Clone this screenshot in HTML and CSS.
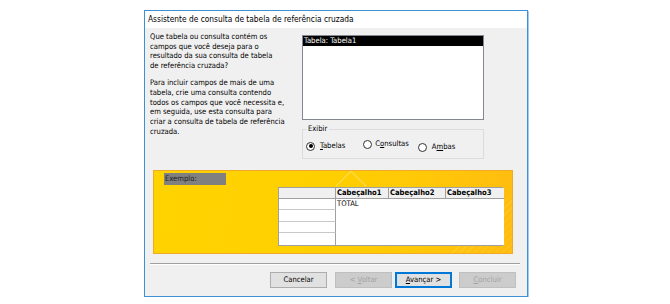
FILE: index.html
```html
<!DOCTYPE html>
<html lang="pt">
<head>
<meta charset="utf-8">
<link rel="stylesheet" href="styles.css">
</head>
<body>
<div class="window">
  <div class="titlebar">Assistente de consulta de tabela de referência cruzada</div>
  <div class="content">
    <div class="top">
      <div class="intro">
        <p>Que tabela ou consulta contém os<br>campos que você deseja para o<br>resultado da sua consulta de tabela<br>de referência cruzada?</p>
        <p>Para incluir campos de mais de uma<br>tabela, crie uma consulta contendo<br>todos os campos que você necessita e,<br>em seguida, use esta consulta para<br>criar a consulta de tabela de referência<br>cruzada.</p>
      </div>
      <div class="side">
        <div class="listbox"><div class="item selected">Tabela: Tabela1</div></div>
        <div class="group">
          <div class="legend">Exibir</div>
          <div class="radios">
            <div class="radio r1"><span class="dot checked"></span><span><u>T</u>abelas</span></div>
            <div class="radio r2"><span class="dot"></span><span>C<u>o</u>nsultas</span></div>
            <div class="radio r3"><span class="dot"></span><span>A<u>m</u>bas</span></div>
          </div>
        </div>
      </div>
    </div>
    <div class="example">
      <div class="deco deco1"></div>
      <div class="deco deco2"></div>
      <div class="example-label">Exemplo:</div>
      <div class="xtab">
        <div class="corner"></div>
        <div class="hcell">Cabeçalho1</div>
        <div class="hcell">Cabeçalho2</div>
        <div class="hcell last">Cabeçalho3</div>
        <div class="rcell"></div>
        <div class="data">TOTAL</div>
        <div class="rcell"></div>
        <div class="rcell"></div>
        <div class="rcell lastrow"></div>
      </div>
    </div>
    <div class="sep"></div>
    <div class="buttons">
      <div class="btn">Cancelar</div>
      <div class="btn disabled back">&lt; <u>V</u>oltar</div>
      <div class="btn default"><u>A</u>vançar &gt;</div>
      <div class="btn disabled finish"><u>C</u>oncluir</div>
    </div>
  </div>
</div>
</body>
</html>
```

FILE: styles.css
```css
* { box-sizing: border-box; }
html, body { margin: 0; padding: 0; background: #ffffff; }
body {
  font-family: "DejaVu Sans Condensed", "DejaVu Sans", sans-serif;
  font-stretch: condensed;
  font-size: 7.6px;
  color: #000;
}
.window {
  margin: 10px 0 0 144px;
  width: 384px;
  height: 287px;
  border: 1px solid #3d8fd6;
  box-shadow: 1px 1px 0 #9fcdf0;
  background: #f0f0f0;
  display: flex;
  flex-direction: column;
}
.titlebar {
  height: 17px;
  background: #ffffff;
  padding-left: 3px;
  font-size: 8.3px;
  line-height: 16px;
  color: #000;
}
.content {
  flex: 1;
  display: flex;
  flex-direction: column;
}
.top {
  display: flex;
  height: 131px;
}
.intro {
  width: 157px;
  padding: 4px 0 0 5px;
  line-height: 9.7px;
}
.intro p { margin: 0 0 7.3px 0; white-space: nowrap; }
.side {
  width: 182px;
  padding-top: 7px;
  display: flex;
  flex-direction: column;
}
.listbox {
  height: 85px;
  background: #fff;
  border: 1px solid #828790;
}
.item {
  height: 10px;
  line-height: 10px;
  padding-left: 1px;
}
.item.selected {
  background: #000;
  color: #fff;
}
.group {
  margin-top: 9px;
  height: 30px;
  border: 1px solid #dcdcdc;
  position: relative;
}
.legend {
  position: absolute;
  top: -6px;
  left: 3px;
  padding: 0 2px;
  background: #f0f0f0;
  line-height: 10px;
}
.radios {
  display: flex;
  padding: 10px 0 0 3px;
}
.radio {
  display: flex;
  align-items: center;
  gap: 5px;
  line-height: 10px;
}
.r2 { margin-left: 18px; gap: 3px; margin-top: -4px; }
.r3 { margin-left: 9px; gap: 5px; margin-top: 2px; }
.dot {
  width: 9px;
  height: 9px;
  border-radius: 50%;
  border: 1px solid #333;
  background: #fff;
  position: relative;
  flex: none;
}
.dot.checked::after {
  content: "";
  position: absolute;
  left: 1.5px;
  top: 1.5px;
  width: 4px;
  height: 4px;
  border-radius: 50%;
  background: #000;
}
.example {
  margin: 11px 0 0 8px;
  width: 360px;
  height: 84px;
  border: 1px solid #f0aa2a;
  background: linear-gradient(95deg, #ffd300 0%, #ffd000 45%, #ffc808 75%, #ffbc10 100%);
  position: relative;
  overflow: hidden;
  display: flex;
  flex-direction: column;
  padding: 2px 0 0 10px;
}
.deco {
  position: absolute;
  pointer-events: none;
}
.deco1 {
  left: 186px;
  top: 4px;
  width: 22px;
  height: 22px;
  border-left: 1px solid rgba(255,255,255,0.35);
  border-top: 1px solid rgba(255,255,255,0.35);
  transform: rotate(45deg);
}
.deco2 {
  right: 0;
  bottom: 0;
  width: 160px;
  height: 84px;
  background:
    repeating-linear-gradient(135deg, rgba(255,255,255,0.12) 0 1px, transparent 1px 5px);
  clip-path: polygon(60% 100%, 100% 30%, 100% 100%);
}
.example-label {
  width: 62px;
  height: 12px;
  background: #808080;
  color: #202020;
  line-height: 12px;
  padding-left: 1px;
  position: relative;
}
.xtab {
  position: relative;
  margin: 2px 0 0 114px;
  width: 225px;
  display: grid;
  grid-template-columns: 57px 53px 57px 58px;
  grid-template-rows: 11px 11px 12px 11px 12px;
  border: 1px solid #a0a0a0;
  background: #fff;
}
.corner {
  background: #f0f0f0;
  border-right: 1px solid #a0a0a0;
  border-bottom: 1px solid #a0a0a0;
}
.hcell {
  background: #f0f0f0;
  font-weight: bold;
  line-height: 10px;
  padding-left: 1px;
  border-right: 1px solid #a0a0a0;
  border-bottom: 1px solid #a0a0a0;
  white-space: nowrap;
}
.hcell.last { border-right: none; }
.rcell {
  grid-column: 1;
  background: #fff;
  border-right: 1px solid #a0a0a0;
  border-bottom: 1px solid #c8c8c8;
}
.rcell.lastrow { border-bottom: none; }
.data {
  grid-column: 2 / 5;
  grid-row: 2 / 6;
  background: #fff;
  line-height: 10px;
  padding-left: 1px;
}
.sep {
  margin: 9px 0 0 5px;
  width: 370px;
  height: 2px;
  border-top: 1px solid #a0a0a0;
  border-bottom: 1px solid #ffffff;
}
.buttons {
  display: flex;
  justify-content: flex-end;
  padding-right: 11px;
  margin-top: 7px;
}
.btn {
  width: 57px;
  height: 16px;
  border: 1px solid #adadad;
  background: #e1e1e1;
  text-align: center;
  line-height: 14px;
}
.btn + .btn { margin-left: 8px; }
.btn.back { margin-left: 8px; }
.btn.default { margin-left: 3px; border-color: #0078d7; box-shadow: inset 0 0 0 1px #0078d7; }
.btn.finish { margin-left: 7px; }
.btn.disabled {
  background: #cccccc;
  border-color: #bfbfbf;
  color: #a3a3a3;
}
```
